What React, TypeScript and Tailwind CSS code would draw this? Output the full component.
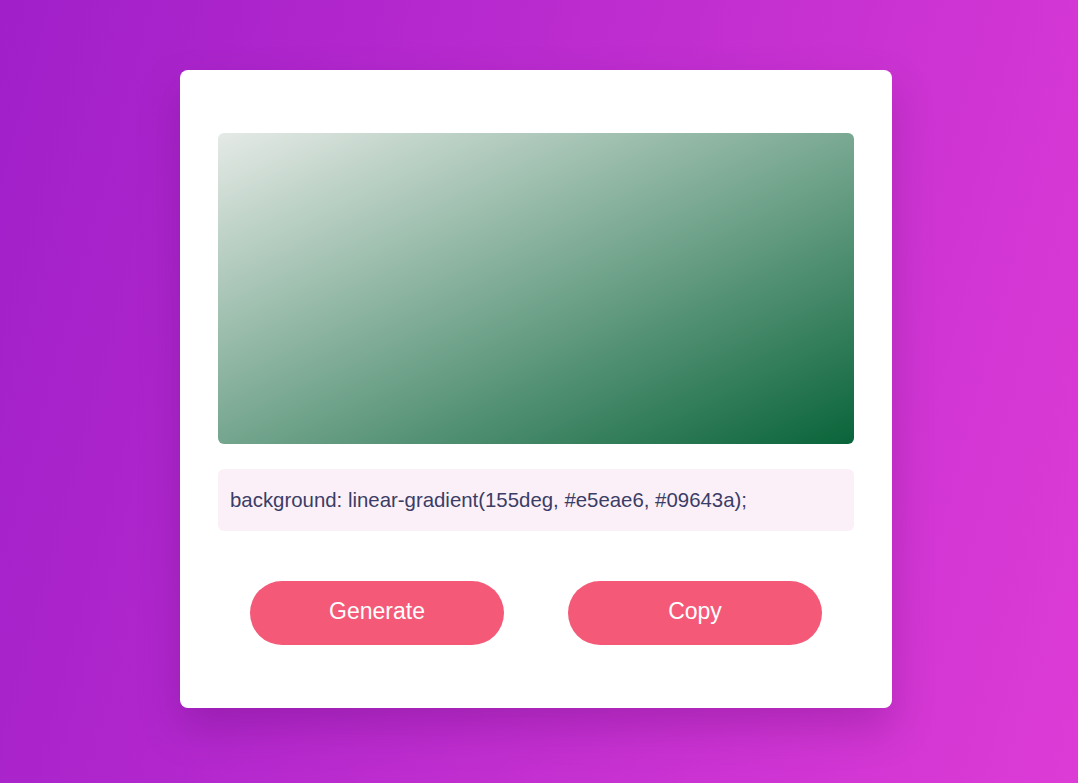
export default function App() {
  return (
    <div
      className="w-full h-[783px] flex justify-start pl-[180px] pt-[70px] bg-[linear-gradient(105deg,#a01fc9,#dd3bd6)]"
      style={{ fontFamily: '"Liberation Sans", Arial, sans-serif' }}
    >
      <div className="w-[712px] h-[638px] bg-white rounded-lg shadow-[0_20px_40px_rgba(80,0,100,0.25)] px-[38px] pt-[63px] flex flex-col">
        <div className="h-[311px] rounded-md bg-[linear-gradient(155deg,#e5eae6,#09643a)]" />
        <div className="mt-[25px] h-[62px] rounded-md bg-[#fcf0f8] flex items-center px-3 text-[20.4px] text-[#3a3d66]">
          background: linear-gradient(155deg, #e5eae6, #09643a);
        </div>
        <div className="mt-[50px] flex justify-around">
          <button className="w-[254px] h-[64px] rounded-full bg-[#f45a78] text-white text-[23px] pb-[3px]">Generate</button>
          <button className="w-[254px] h-[64px] rounded-full bg-[#f45a78] text-white text-[23px] pb-[3px]">Copy</button>
        </div>
      </div>
    </div>
  );
}
